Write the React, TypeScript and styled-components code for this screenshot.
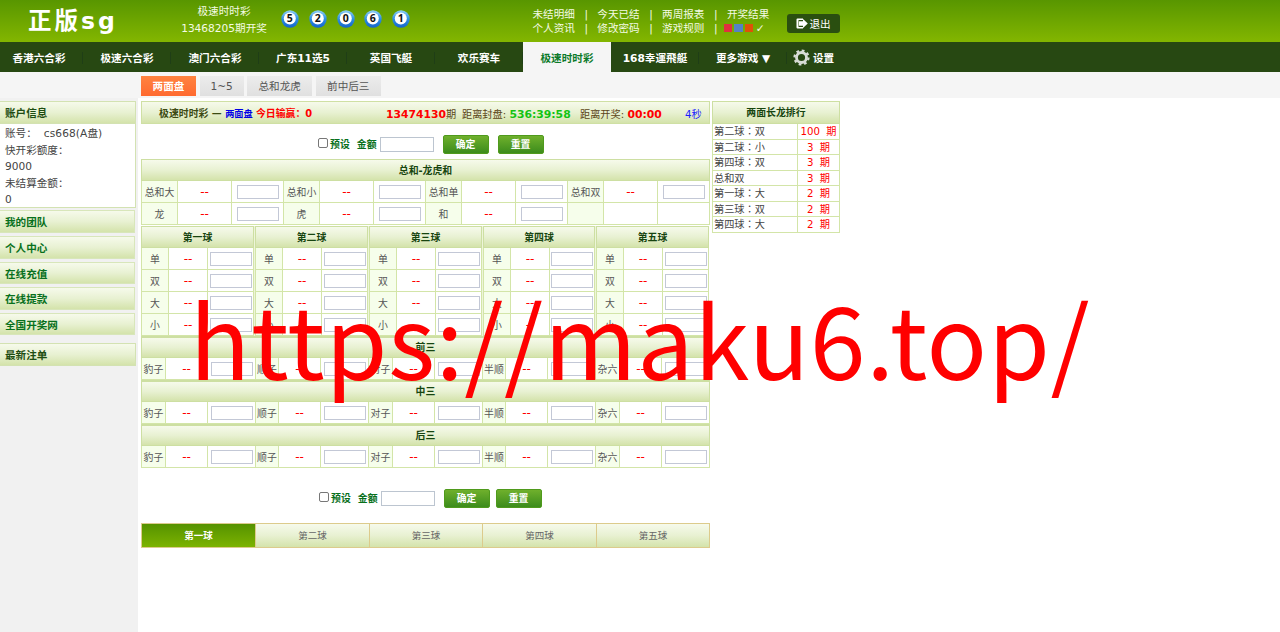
import React from 'react';
import styled, { createGlobalStyle, css } from 'styled-components';

const GlobalStyle = createGlobalStyle`
  * {
    box-sizing: border-box;
  }

  body {
    margin: 0;
    background: #fff;
    font-family: 'DejaVu Sans', 'Noto Sans CJK SC', sans-serif;
    font-size: 10.6px;
    color: #444;
  }
`;

const headGradient = css`
  background: linear-gradient(#f6faeb, #e8f1d2 50%, #d4e3ab);
`;

const Page = styled.div`
  position: relative;
  width: 1280px;
  height: 632px;
  overflow: hidden;
  white-space: nowrap;
`;

const Header = styled.header`
  display: flex;
  height: 42px;
  background: linear-gradient(#589600, #83b600);
  color: #f4fbe4;
`;

const Logo = styled.div`
  width: 167px;
  padding-left: 28px;
  font-size: 23.5px;
  font-weight: 700;
  line-height: 43px;
  letter-spacing: 3px;
  color: #fff;
`;

const DrawInfo = styled.div`
  width: 114px;
  padding-top: 3px;
  text-align: center;
  line-height: 17px;
`;

const Balls = styled.div`
  display: flex;
  gap: 9.8px;
  width: 251px;
  padding: 10px 0 0 0;
`;

const BallSvg = styled.svg`
  width: 18px;
  height: 18px;
  flex: none;
`;

const Links = styled.div`
  display: grid;
  grid-template-columns: repeat(4, 64.8px);
  grid-template-rows: 14px 14px;
  width: 255px;
  padding-top: 7px;
  line-height: 14px;
`;

const LinkItem = styled.div<{ $bar?: boolean }>`
  display: flex;
  align-items: center;
  padding-left: 0.5px;

  &::after {
    content: '${p => (p.$bar ? '|' : '')}';
    margin-left: 9.5px;
  }
`;

const Skins = styled.div`
  display: flex;
  align-items: center;
  gap: 2.2px;
  margin-left: -3px;
`;

const Skin = styled.span<{ $color: string }>`
  width: 8.4px;
  height: 8.4px;
  background: ${p => p.$color};
`;

const Logout = styled.button`
  display: flex;
  align-items: center;
  justify-content: center;
  gap: 1px;
  width: 53px;
  height: 19px;
  margin-top: 14px;
  padding: 0;
  border: 0;
  border-radius: 3px;
  background: #2a4f10;
  color: #fff;
  font: inherit;
`;

const Nav = styled.nav`
  display: flex;
  height: 30px;
  background: #274812;
`;

const NavItem = styled.div<{ $active?: boolean; $width?: number }>`
  display: flex;
  align-items: center;
  justify-content: center;
  flex: none;
  gap: 3px;
  width: ${p => p.$width || 88}px;
  background: ${p =>
    p.$active ? '#f5f5f5' : 'linear-gradient(#1f3e16, #1f3e16) right 10px / 1px 12px no-repeat'};
  color: ${p => (p.$active ? '#0b7a2a' : '#fff')};
  font-weight: 700;

  &:first-child {
    margin-left: -5px;
  }
  &:last-child {
    background: none;
  }
`;

const SubBar = styled.div`
  display: flex;
  gap: 3.6px;
  height: 26px;
  padding: 4px 0 2px 141px;
  background: #f5f5f5;
`;

const SubTab = styled.div<{ $active?: boolean; $width: number }>`
  width: ${p => p.$width}px;
  height: 20px;
  line-height: 21px;
  text-align: center;
  background: ${p => (p.$active ? 'linear-gradient(#ff8340, #ff6a30)' : 'linear-gradient(#ececec, #e0e0e0)')};
  color: ${p => (p.$active ? '#fff' : '#555')};
  font-weight: ${p => (p.$active ? 700 : 400)};
`;

const Body = styled.div`
  display: flex;
  height: 534px;
`;

const Sidebar = styled.aside`
  display: flex;
  flex-direction: column;
  width: 138px;
  padding-top: 3px;
  background: #f1f1f1;
`;

const SideHead = styled.div`
  ${headGradient}
  width: 136px;
  height: 23px;
  padding-left: 5px;
  border: 1px solid #d3e2b2;
  border-left: 0;
  line-height: 23px;
  font-weight: 700;
  color: #1e4d12;
`;

const Account = styled.div`
  width: 136px;
  height: 84px;
  margin-bottom: 2.4px;
  padding: 1px 0 0 5px;
  border: 1px solid #d3e2b2;
  border-width: 0 1px 1px 0;
  background: #fff;
  line-height: 16.6px;
`;

const AccountName = styled.span`
  margin-left: 7px;
  letter-spacing: 0.1px;
`;

const SideItem = styled.div`
  ${headGradient}
  width: 135px;
  height: 22.6px;
  margin-bottom: 3px;
  padding-left: 5px;
  border: 1px solid #d8e6ba;
  border-left: 0;
  line-height: 23px;
  font-weight: 700;
  color: #08701c;
`;

const SideFoot = styled(SideHead)`
  margin-top: 4.5px;
`;

const Main = styled.main`
  width: 569px;
  margin: 3px 0 0 3px;
  font-size: 9.9px;
`;

const InfoBar = styled.div`
  ${headGradient}
  display: flex;
  align-items: center;
  height: 23px;
  padding: 1px 0 0 17px;
  border: 1px solid #cfe0a4;
  color: #5b4517;
  font-size: 10.2px;
`;

const Period = styled.div`
  width: 76px;
  margin-left: auto;
`;

const Close = styled.div`
  width: 118px;
`;

const Open = styled.div`
  width: 105px;
`;

const Seconds = styled.div`
  width: 24px;
  color: #1a1aff;
`;

const Strong = styled.b<{ $color: string; $size?: number }>`
  color: ${p => p.$color};
  font-size: ${p => p.$size || 10.8}px;
`;

const BetBar = styled.div<{ $left: number; $height: number; $gap: number }>`
  display: flex;
  align-items: center;
  height: ${p => p.$height}px;
  padding: 5px 0 0 ${p => p.$left}px;
  color: #08701c;
  font-weight: 700;

  button + button {
    margin-left: ${p => p.$gap}px;
  }
`;

const Check = styled.input`
  appearance: none;
  width: 10px;
  height: 10px;
  margin: -2px 2px 0 0;
  border: 1px solid #777;
  border-radius: 2px;
  background: #fff;
`;

const Amount = styled.input`
  width: 54px;
  height: 15px;
  margin: 0 9px 0 3px;
  padding: 0;
  border: 1px solid #bcc5d0;
`;

const Label = styled.span`
  margin-right: 7px;
`;

const Button = styled.button`
  width: 46px;
  height: 19px;
  padding: 0;
  border: 1px solid #4f9a1c;
  border-radius: 2px;
  background: linear-gradient(#6fb02c, #3c8c1c);
  color: #fff;
  font: inherit;
`;

const TableHead = styled.div<{ $first?: boolean }>`
  ${headGradient}
  height: 22px;
  border: 1px solid #cddfa2;
  border-top-width: ${p => (p.$first ? 1 : 2)}px;
  line-height: ${p => (p.$first ? 21 : 20)}px;
  text-align: center;
  font-weight: 700;
  color: #17450f;
`;

const Grid = styled.div<{ $cols: string }>`
  display: grid;
  grid-template-columns: ${p => p.$cols};
  grid-auto-rows: 22px;
  border-left: 1px solid #d3e5a8;
`;

const Cell = styled.div<{ $name?: boolean }>`
  display: flex;
  align-items: center;
  justify-content: center;
  border: 1px solid #d3e5a8;
  border-width: 0 1px 1px 0;
  background: ${p => (p.$name ? '#f6feeb' : '#fff')};
  color: #555;
`;

const Odds = styled.span`
  color: #f00;
  font-size: 12px;
`;

const Stake = styled.input`
  width: 42px;
  height: 14px;
  padding: 0;
  border: 1px solid #c3c8d6;
  background: #fff;
`;

const BallTables = styled.div`
  display: grid;
  grid-template-columns: 113px 113px 113px 112px 113px;
  column-gap: 1px;
  width: 568px;
  margin-top: 1px;
  background: #edf5d9;
`;

const ResultTabs = styled.div`
  display: grid;
  grid-template-columns: 114px 114px 113px 114px 113px;
  height: 25px;
  border: 1px solid #dccb8c;
  border-right: 0;
`;

const ResultTab = styled.div<{ $active?: boolean }>`
  ${headGradient}
  border-right: 1px solid #dccb8c;
  line-height: 23px;
  text-align: center;
  color: #666;
  font-size: 9.5px;

  ${p =>
    p.$active &&
    css`
      background: linear-gradient(#559200, #7cb300);
      color: #fff;
      font-weight: 700;
    `}
`;

const Rank = styled.div`
  width: 128px;
  margin: 3px 0 0 2px;
  font-family: 'DejaVu Sans', 'Noto Sans CJK TC', sans-serif;
  font-size: 10.2px;
`;

const RankHead = styled(TableHead)`
  height: 23px;
  font-size: 9.9px;
`;

const RankRow = styled.div`
  display: grid;
  grid-template-columns: 85px 41px;
  height: 15.5px;
  border: 1px solid #d3e5a8;
  border-top: 0;
  line-height: 15px;
`;

const RankName = styled.div`
  padding-left: 1px;
  border-right: 1px solid #d3e5a8;
`;

const RankCount = styled.div`
  color: #f00;
  text-align: center;
  word-spacing: 3px;
`;

const Watermark = styled.div`
  position: absolute;
  top: 263px;
  left: 189.5px;
  font-family: 'Noto Sans CJK SC', sans-serif;
  font-size: 100px;
  line-height: 148px;
  letter-spacing: 0.7px;
  color: #f00;
  pointer-events: none;
`;

const numbers = [5, 2, 0, 6, 1];
const navs = ['香港六合彩', '极速六合彩', '澳门六合彩', '广东11选5', '英国飞艇', '欢乐赛车', '极速时时彩', '168幸運飛艇'];
const sideItems = ['我的团队', '个人中心', '在线充值', '在线提款', '全国开奖网'];
const sums = ['总和大', '总和小', '总和单', '总和双', '龙', '虎', '和', ''];
const balls = ['第一球', '第二球', '第三球', '第四球', '第五球'];
const sides = ['单', '双', '大', '小'];
const threes = ['前三', '中三', '后三'];
const shapes = ['豹子', '顺子', '对子', '半顺', '杂六'];
const ranks: [string, number][] = [
  ['第二球：双', 100],
  ['第二球：小', 3],
  ['第四球：双', 3],
  ['总和双', 3],
  ['第一球：大', 2],
  ['第三球：双', 2],
  ['第四球：大', 2],
];

const Ball = ({ value }: { value: number }) => (
  <BallSvg viewBox="0 0 18 18">
    <defs>
      <linearGradient id="ball" x1="0" y1="0" x2="0" y2="1">
        <stop offset="0" stopColor="#8fd0f5" />
        <stop offset="0.5" stopColor="#2e8fe0" />
        <stop offset="1" stopColor="#1464cc" />
      </linearGradient>
    </defs>
    <circle cx="9" cy="9" r="8.7" fill="url(#ball)" />
    <circle cx="8.8" cy="8.4" r="6" fill="#fff" />
    <text x="8.8" y="12.2" textAnchor="middle" fontSize="10.5" fontWeight="700" fill="#111" fontFamily="Open Sans, sans-serif">
      {value}
    </text>
  </BallSvg>
);

const Gear = () => (
  <svg width="17" height="17" viewBox="0 0 18 18" fill="none" stroke="#d8dcd6">
    <circle cx="9" cy="9" r="5.3" strokeWidth="3" />
    <circle cx="9" cy="9" r="7.4" strokeWidth="2.4" strokeDasharray="2.9 2.91" />
  </svg>
);

const LogoutIcon = () => (
  <svg width="12" height="11" viewBox="0 0 12 11" fill="#fff">
    <path d="M1.500 0.500h5.500v1.500h-4.500v7h4.500v1.500h-5.500a1 1 0 0 1-1-1v-8a1 1 0 0 1 1-1z" />
    <path d="M3 3.200h4v-2.200l4.800 4.500l-4.800 4.500v-2.200h-4z" />
  </svg>
);

const BetCells = ({ name }: { name: string }) => (
  <>
    <Cell $name>{name}</Cell>
    <Cell>{name && <Odds>--</Odds>}</Cell>
    <Cell>{name && <Stake />}</Cell>
  </>
);

const BetControls = ({ left, height, gap }: { left: number; height: number; gap: number }) => (
  <BetBar $left={left} $height={height} $gap={gap}>
    <Check type="checkbox" />
    <Label>预设</Label>
    <span>金额</span>
    <Amount />
    <Button>确定</Button>
    <Button>重置</Button>
  </BetBar>
);

const App = () => {
  return (
    <Page>
      <GlobalStyle />
      <Header>
        <Logo>正版sg</Logo>
        <DrawInfo>
          <div>极速时时彩</div>
          <div>13468205期开奖</div>
        </DrawInfo>
        <Balls>
          {numbers.map(n => (
            <Ball key={n} value={n} />
          ))}
        </Balls>
        <Links>
          <LinkItem $bar>未结明细</LinkItem>
          <LinkItem $bar>今天已结</LinkItem>
          <LinkItem $bar>两周报表</LinkItem>
          <LinkItem>开奖结果</LinkItem>
          <LinkItem $bar>个人资讯</LinkItem>
          <LinkItem $bar>修改密码</LinkItem>
          <LinkItem $bar>游戏规则</LinkItem>
          <LinkItem>
            <Skins>
              <Skin $color="#e0303f" />
              <Skin $color="#5583c4" />
              <Skin $color="#de5208" />
              <span>✓</span>
            </Skins>
          </LinkItem>
        </Links>
        <Logout>
          <LogoutIcon />
          退出
        </Logout>
      </Header>
      <Nav>
        {navs.map(n => (
          <NavItem key={n} $active={n === '极速时时彩'}>
            {n}
          </NavItem>
        ))}
        <NavItem>更多游戏 ▼</NavItem>
        <NavItem $width={53}>
          <Gear />
          设置
        </NavItem>
      </Nav>
      <SubBar>
        <SubTab $active $width={55}>两面盘</SubTab>
        <SubTab $width={44}>1~5</SubTab>
        <SubTab $width={65}>总和龙虎</SubTab>
        <SubTab $width={65}>前中后三</SubTab>
      </SubBar>
      <Body>
        <Sidebar>
          <SideHead>账户信息</SideHead>
          <Account>
            <div>
              账号：<AccountName>cs668(A盘)</AccountName>
            </div>
            <div>快开彩额度：</div>
            <div>9000</div>
            <div>未结算金额：</div>
            <div>0</div>
          </Account>
          {sideItems.map(s => (
            <SideItem key={s}>{s}</SideItem>
          ))}
          <SideFoot>最新注单</SideFoot>
        </Sidebar>
        <Main>
          <InfoBar>
            <Strong $color="#3c4a12" $size={9.9}>极速时时彩 —&nbsp;</Strong>
            <Strong $color="#0000e6" $size={9.2}>两面盘&nbsp;</Strong>
            <Strong $color="#f00" $size={9.9}>今日输赢：0</Strong>
            <Period>
              <Strong $color="#f00">13474130</Strong>期
            </Period>
            <Close>
              距离封盘: <Strong $color="#12c312">536:39:58</Strong>
            </Close>
            <Open>
              距离开奖: <Strong $color="#f00">00:00</Strong>
            </Open>
            <Seconds>4秒</Seconds>
          </InfoBar>
          <BetControls left={177} height={35} gap={9} />
          <TableHead $first>总和-龙虎和</TableHead>
          <Grid $cols="36px 54px 52px 36px 54px 52px 36px 54px 52px 36px 54px 52px">
            {sums.map(s => (
              <BetCells key={s} name={s} />
            ))}
          </Grid>
          <BallTables>
            {balls.map(b => (
              <div key={b}>
                <TableHead $first>{b}</TableHead>
                <Grid $cols="27px 39px 1fr">
                  {sides.map(s => (
                    <BetCells key={s} name={s} />
                  ))}
                </Grid>
              </div>
            ))}
          </BallTables>
          {threes.map(t => (
            <div key={t}>
              <TableHead>{t}</TableHead>
              <Grid $cols="24px 42px 48px 23px 42px 48px 24px 42px 48px 23px 42px 48px 24px 42px 48px">
                {shapes.map(s => (
                  <BetCells key={s} name={s} />
                ))}
              </Grid>
            </div>
          ))}
          <BetControls left={178} height={55} gap={6} />
          <ResultTabs>
            {balls.map((b, i) => (
              <ResultTab key={b} $active={i === 0}>
                {b}
              </ResultTab>
            ))}
          </ResultTabs>
        </Main>
        <Rank>
          <RankHead $first>两面长龙排行</RankHead>
          {ranks.map(([name, count]) => (
            <RankRow key={name}>
              <RankName>{name}</RankName>
              <RankCount>{count} 期</RankCount>
            </RankRow>
          ))}
        </Rank>
      </Body>
      <Watermark>https://maku6.top/</Watermark>
    </Page>
  );
};

export default App;
